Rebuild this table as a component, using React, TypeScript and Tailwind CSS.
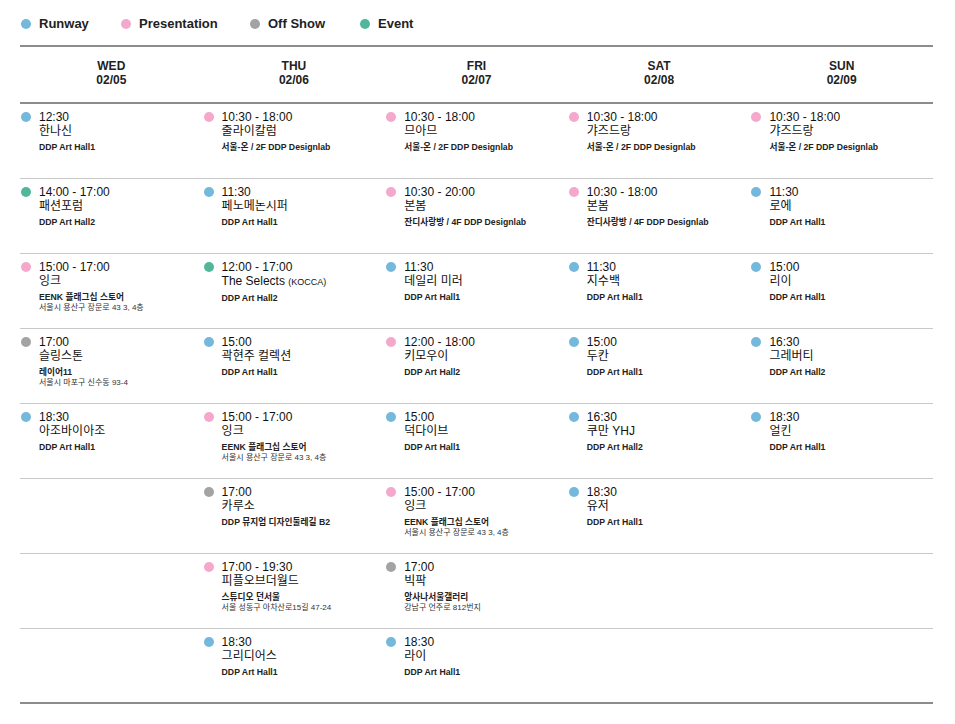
import React from 'react';

type Kind = 'runway' | 'presentation' | 'off' | 'event';

interface Show {
  kind: Kind;
  time: string;
  name: React.ReactNode;
  venue: string;
  address?: string;
}

const dotColors: Record<Kind, string> = {
  runway: 'bg-[#74b8dc]',
  presentation: 'bg-[#f4a8cc]',
  off: 'bg-[#a3a3a3]',
  event: 'bg-[#52b79a]',
};

const legend: { kind: Kind; label: string; width: string }[] = [
  { kind: 'runway', label: 'Runway', width: 'w-[100px]' },
  { kind: 'presentation', label: 'Presentation', width: 'w-[129px]' },
  { kind: 'off', label: 'Off Show', width: 'w-[110px]' },
  { kind: 'event', label: 'Event', width: '' },
];

const days = [
  { day: 'WED', date: '02/05' },
  { day: 'THU', date: '02/06' },
  { day: 'FRI', date: '02/07' },
  { day: 'SAT', date: '02/08' },
  { day: 'SUN', date: '02/09' },
];

const hall1 = 'DDP Art Hall1';
const hall2 = 'DDP Art Hall2';
const seoulOn = '서울-온 / 2F DDP Designlab';
const jandi = '잔디사랑방 / 4F DDP Designlab';
const eenk = 'EENK 플래그십 스토어';
const eenkAddr = '서울시 용산구 장문로 43 3, 4층';

const schedule: Show[][] = [
  [
    { kind: 'runway', time: '12:30', name: '한나신', venue: hall1 },
    { kind: 'event', time: '14:00 - 17:00', name: '패션포럼', venue: hall2 },
    { kind: 'presentation', time: '15:00 - 17:00', name: '잉크', venue: eenk, address: eenkAddr },
    { kind: 'off', time: '17:00', name: '슬링스톤', venue: '레이어11', address: '서울시 마포구 신수동 93-4' },
    { kind: 'runway', time: '18:30', name: '아조바이아조', venue: hall1 },
  ],
  [
    { kind: 'presentation', time: '10:30 - 18:00', name: '줄라이칼럼', venue: seoulOn },
    { kind: 'runway', time: '11:30', name: '페노메논시퍼', venue: hall1 },
    {
      kind: 'event',
      time: '12:00 - 17:00',
      name: (
        <>
          The Selects <span className="text-[9px]">(KOCCA)</span>
        </>
      ),
      venue: hall2,
    },
    { kind: 'runway', time: '15:00', name: '곽현주 컬렉션', venue: hall1 },
    { kind: 'presentation', time: '15:00 - 17:00', name: '잉크', venue: eenk, address: eenkAddr },
    { kind: 'off', time: '17:00', name: '카루소', venue: 'DDP 뮤지엄 디자인둘레길 B2' },
    { kind: 'presentation', time: '17:00 - 19:30', name: '피플오브더월드', venue: '스튜디오 던서울', address: '서울 성동구 아차산로15길 47-24' },
    { kind: 'runway', time: '18:30', name: '그리디어스', venue: hall1 },
  ],
  [
    { kind: 'presentation', time: '10:30 - 18:00', name: '므아므', venue: seoulOn },
    { kind: 'presentation', time: '10:30 - 20:00', name: '본봄', venue: jandi },
    { kind: 'runway', time: '11:30', name: '데일리 미러', venue: hall1 },
    { kind: 'presentation', time: '12:00 - 18:00', name: '키모우이', venue: hall2 },
    { kind: 'runway', time: '15:00', name: '덕다이브', venue: hall1 },
    { kind: 'presentation', time: '15:00 - 17:00', name: '잉크', venue: eenk, address: eenkAddr },
    { kind: 'off', time: '17:00', name: '빅팍', venue: '앙사나서울갤러리', address: '강남구 언주로 812번지' },
    { kind: 'runway', time: '18:30', name: '라이', venue: hall1 },
  ],
  [
    { kind: 'presentation', time: '10:30 - 18:00', name: '갸즈드랑', venue: seoulOn },
    { kind: 'presentation', time: '10:30 - 18:00', name: '본봄', venue: jandi },
    { kind: 'runway', time: '11:30', name: '지수백', venue: hall1 },
    { kind: 'runway', time: '15:00', name: '두칸', venue: hall1 },
    { kind: 'runway', time: '16:30', name: '쿠만 YHJ', venue: hall2 },
    { kind: 'runway', time: '18:30', name: '유저', venue: hall1 },
  ],
  [
    { kind: 'presentation', time: '10:30 - 18:00', name: '갸즈드랑', venue: seoulOn },
    { kind: 'runway', time: '11:30', name: '로에', venue: hall1 },
    { kind: 'runway', time: '15:00', name: '리이', venue: hall1 },
    { kind: 'runway', time: '16:30', name: '그레버티', venue: hall2 },
    { kind: 'runway', time: '18:30', name: '얼킨', venue: hall1 },
  ],
];

const ROWS = 8;

function ShowCell({ show }: { show?: Show }) {
  if (!show) return <div />;
  return (
    <div className="flex pt-[7px] pl-[1px]">
      <span className={`mt-[1px] h-[10px] w-[10px] shrink-0 rounded-full ${dotColors[show.kind]}`} />
      <div className="ml-[8px] flex flex-col">
        <div className="text-[12px] leading-[12px] text-[#111]">{show.time}</div>
        <div className="text-[12px] leading-[16px] text-[#111]">{show.name}</div>
        <div className="mt-[2px] text-[8.7px] leading-[12px] font-bold text-[#222]">{show.venue}</div>
        {show.address && (
          <div className="text-[8px] leading-[10px] text-[#333]">{show.address}</div>
        )}
      </div>
    </div>
  );
}

export default function App() {
  return (
    <div className="min-h-screen bg-white font-['Liberation_Sans','Noto_Sans_CJK_KR',sans-serif] text-[#111]">
      <div className="ml-[20px] w-[913px]">
        {/* Legend */}
        <div className="flex items-center pt-[16px] pl-[1px]">
          {legend.map((l) => (
            <div key={l.label} className={`flex items-center ${l.width}`}>
              <span className={`h-[10px] w-[10px] rounded-full ${dotColors[l.kind]}`} />
              <span className="ml-[8px] text-[13px] leading-[16px] font-bold text-[#222]">{l.label}</span>
            </div>
          ))}
        </div>

        {/* Table */}
        <div className="mt-[13px] border-t-2 border-[#8c8c8c]">
          <div className="grid h-[57px] grid-cols-5 border-b-2 border-[#8c8c8c] pt-[12px]">
            {days.map((d) => (
              <div key={d.day} className="text-center text-[12px] leading-[14px] font-bold text-[#222]">
                <div>{d.day}</div>
                <div>{d.date}</div>
              </div>
            ))}
          </div>

          {Array.from({ length: ROWS }).map((_, r) => (
            <div
              key={r}
              className={`grid h-[75px] grid-cols-5 ${
                r === ROWS - 1 ? 'border-b-2 border-[#8c8c8c]' : 'border-b border-[#c9c9c9]'
              }`}
            >
              {schedule.map((col, c) => (
                <ShowCell key={c} show={col[r]} />
              ))}
            </div>
          ))}
        </div>
      </div>
    </div>
  );
}
